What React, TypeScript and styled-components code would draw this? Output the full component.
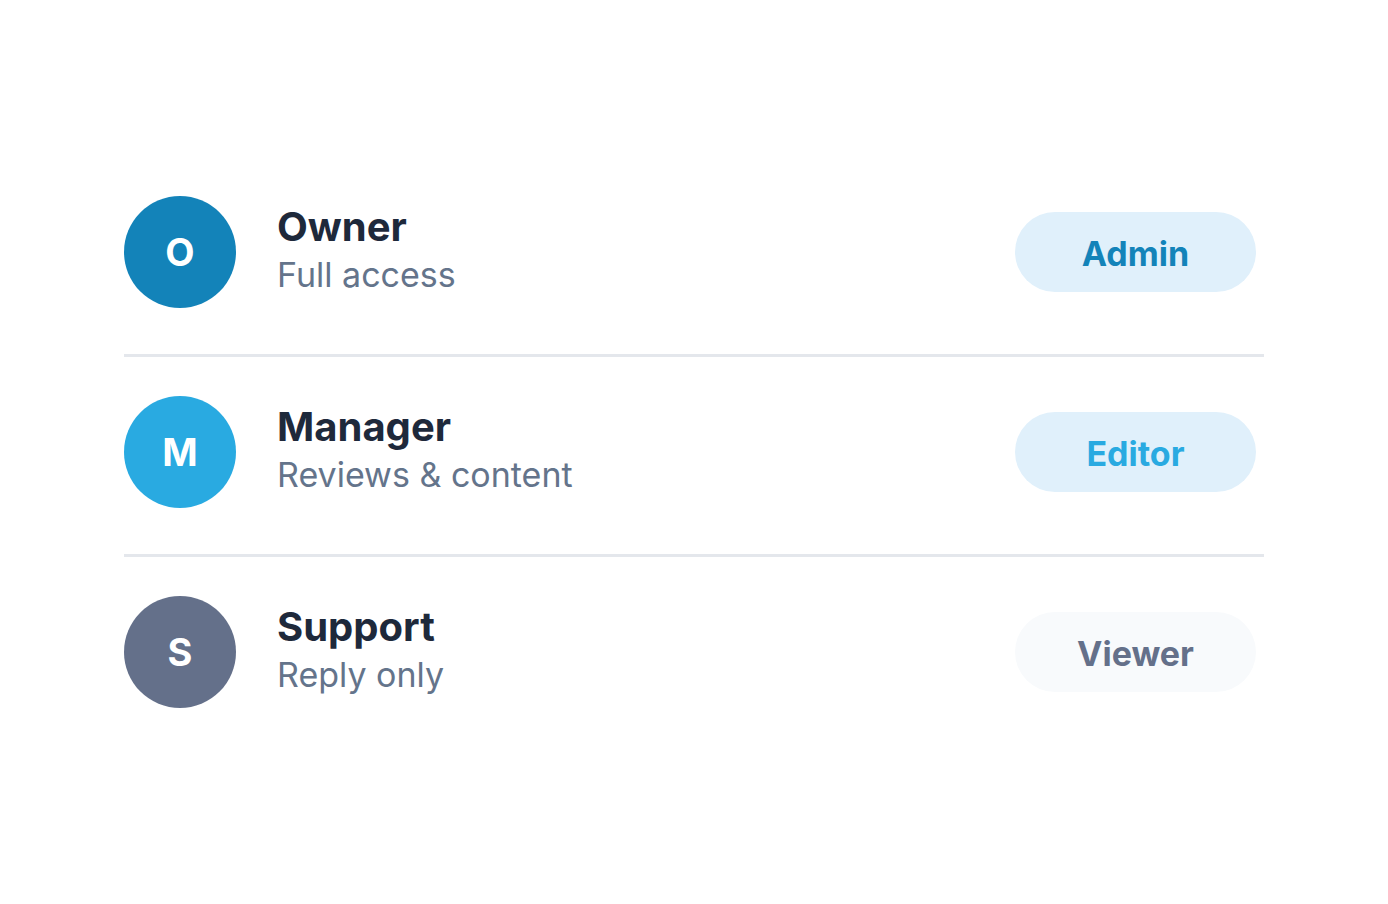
import React from "react";
import styled, { createGlobalStyle } from "styled-components";

const Global = createGlobalStyle`
  html, body { margin: 0; padding: 0; background: #ffffff; }
  body { font-family: Inter, "Noto Sans", sans-serif; }
`;

const Page = styled.div`
  width: 1388px;
  height: 904px;
  display: flex;
  align-items: center;
  justify-content: center;
`;

const List = styled.div`
  width: 1140px;
  display: flex;
  flex-direction: column;
`;

const Row = styled.div`
  display: flex;
  align-items: center;
  height: 112px;
  padding-right: 8px;
`;

const Divider = styled.div`
  height: 3px;
  background: #e4e7ec;
  margin: 46px 0 39px;
`;

const Avatar = styled.div<{ $bg: string }>`
  width: 112px;
  height: 112px;
  border-radius: 50%;
  background: ${(p) => p.$bg};
  color: #ffffff;
  display: flex;
  align-items: center;
  justify-content: center;
  font-size: 38px;
  font-weight: 700;
  flex-shrink: 0;
`;

const Info = styled.div`
  margin-left: 41px;
  flex: 1;
  display: flex;
  flex-direction: column;
  gap: 4px;
  padding-bottom: 6px;
`;

const Title = styled.div`
  font-size: 40px;
  font-weight: 700;
  color: #1e293b;
  line-height: 48px;
`;

const Subtitle = styled.div`
  font-size: 34px;
  font-weight: 400;
  color: #64748b;
  line-height: 40px;
`;

const Badge = styled.div<{ $bg: string; $fg: string }>`
  width: 241px;
  height: 80px;
  border-radius: 40px;
  background: ${(p) => p.$bg};
  color: ${(p) => p.$fg};
  display: flex;
  align-items: center;
  justify-content: center;
  font-size: 34px;
  font-weight: 700;
  padding-top: 3px;
  box-sizing: border-box;
`;

const rows = [
  { letter: "O", avatar: "#1383b9", title: "Owner", sub: "Full access", role: "Admin", bbg: "#e0f0fb", bfg: "#1383b9" },
  { letter: "M", avatar: "#29aae1", title: "Manager", sub: "Reviews & content", role: "Editor", bbg: "#e0f0fb", bfg: "#29aae1" },
  { letter: "S", avatar: "#64708a", title: "Support", sub: "Reply only", role: "Viewer", bbg: "#f8fafc", bfg: "#64708a" },
];

export default function App() {
  return (
    <>
      <Global />
      <Page>
        <List>
          {rows.map((r, i) => (
            <React.Fragment key={r.title}>
              {i > 0 && <Divider />}
              <Row>
                <Avatar $bg={r.avatar}>{r.letter}</Avatar>
                <Info>
                  <Title>{r.title}</Title>
                  <Subtitle>{r.sub}</Subtitle>
                </Info>
                <Badge $bg={r.bbg} $fg={r.bfg}>{r.role}</Badge>
              </Row>
            </React.Fragment>
          ))}
        </List>
      </Page>
    </>
  );
}
